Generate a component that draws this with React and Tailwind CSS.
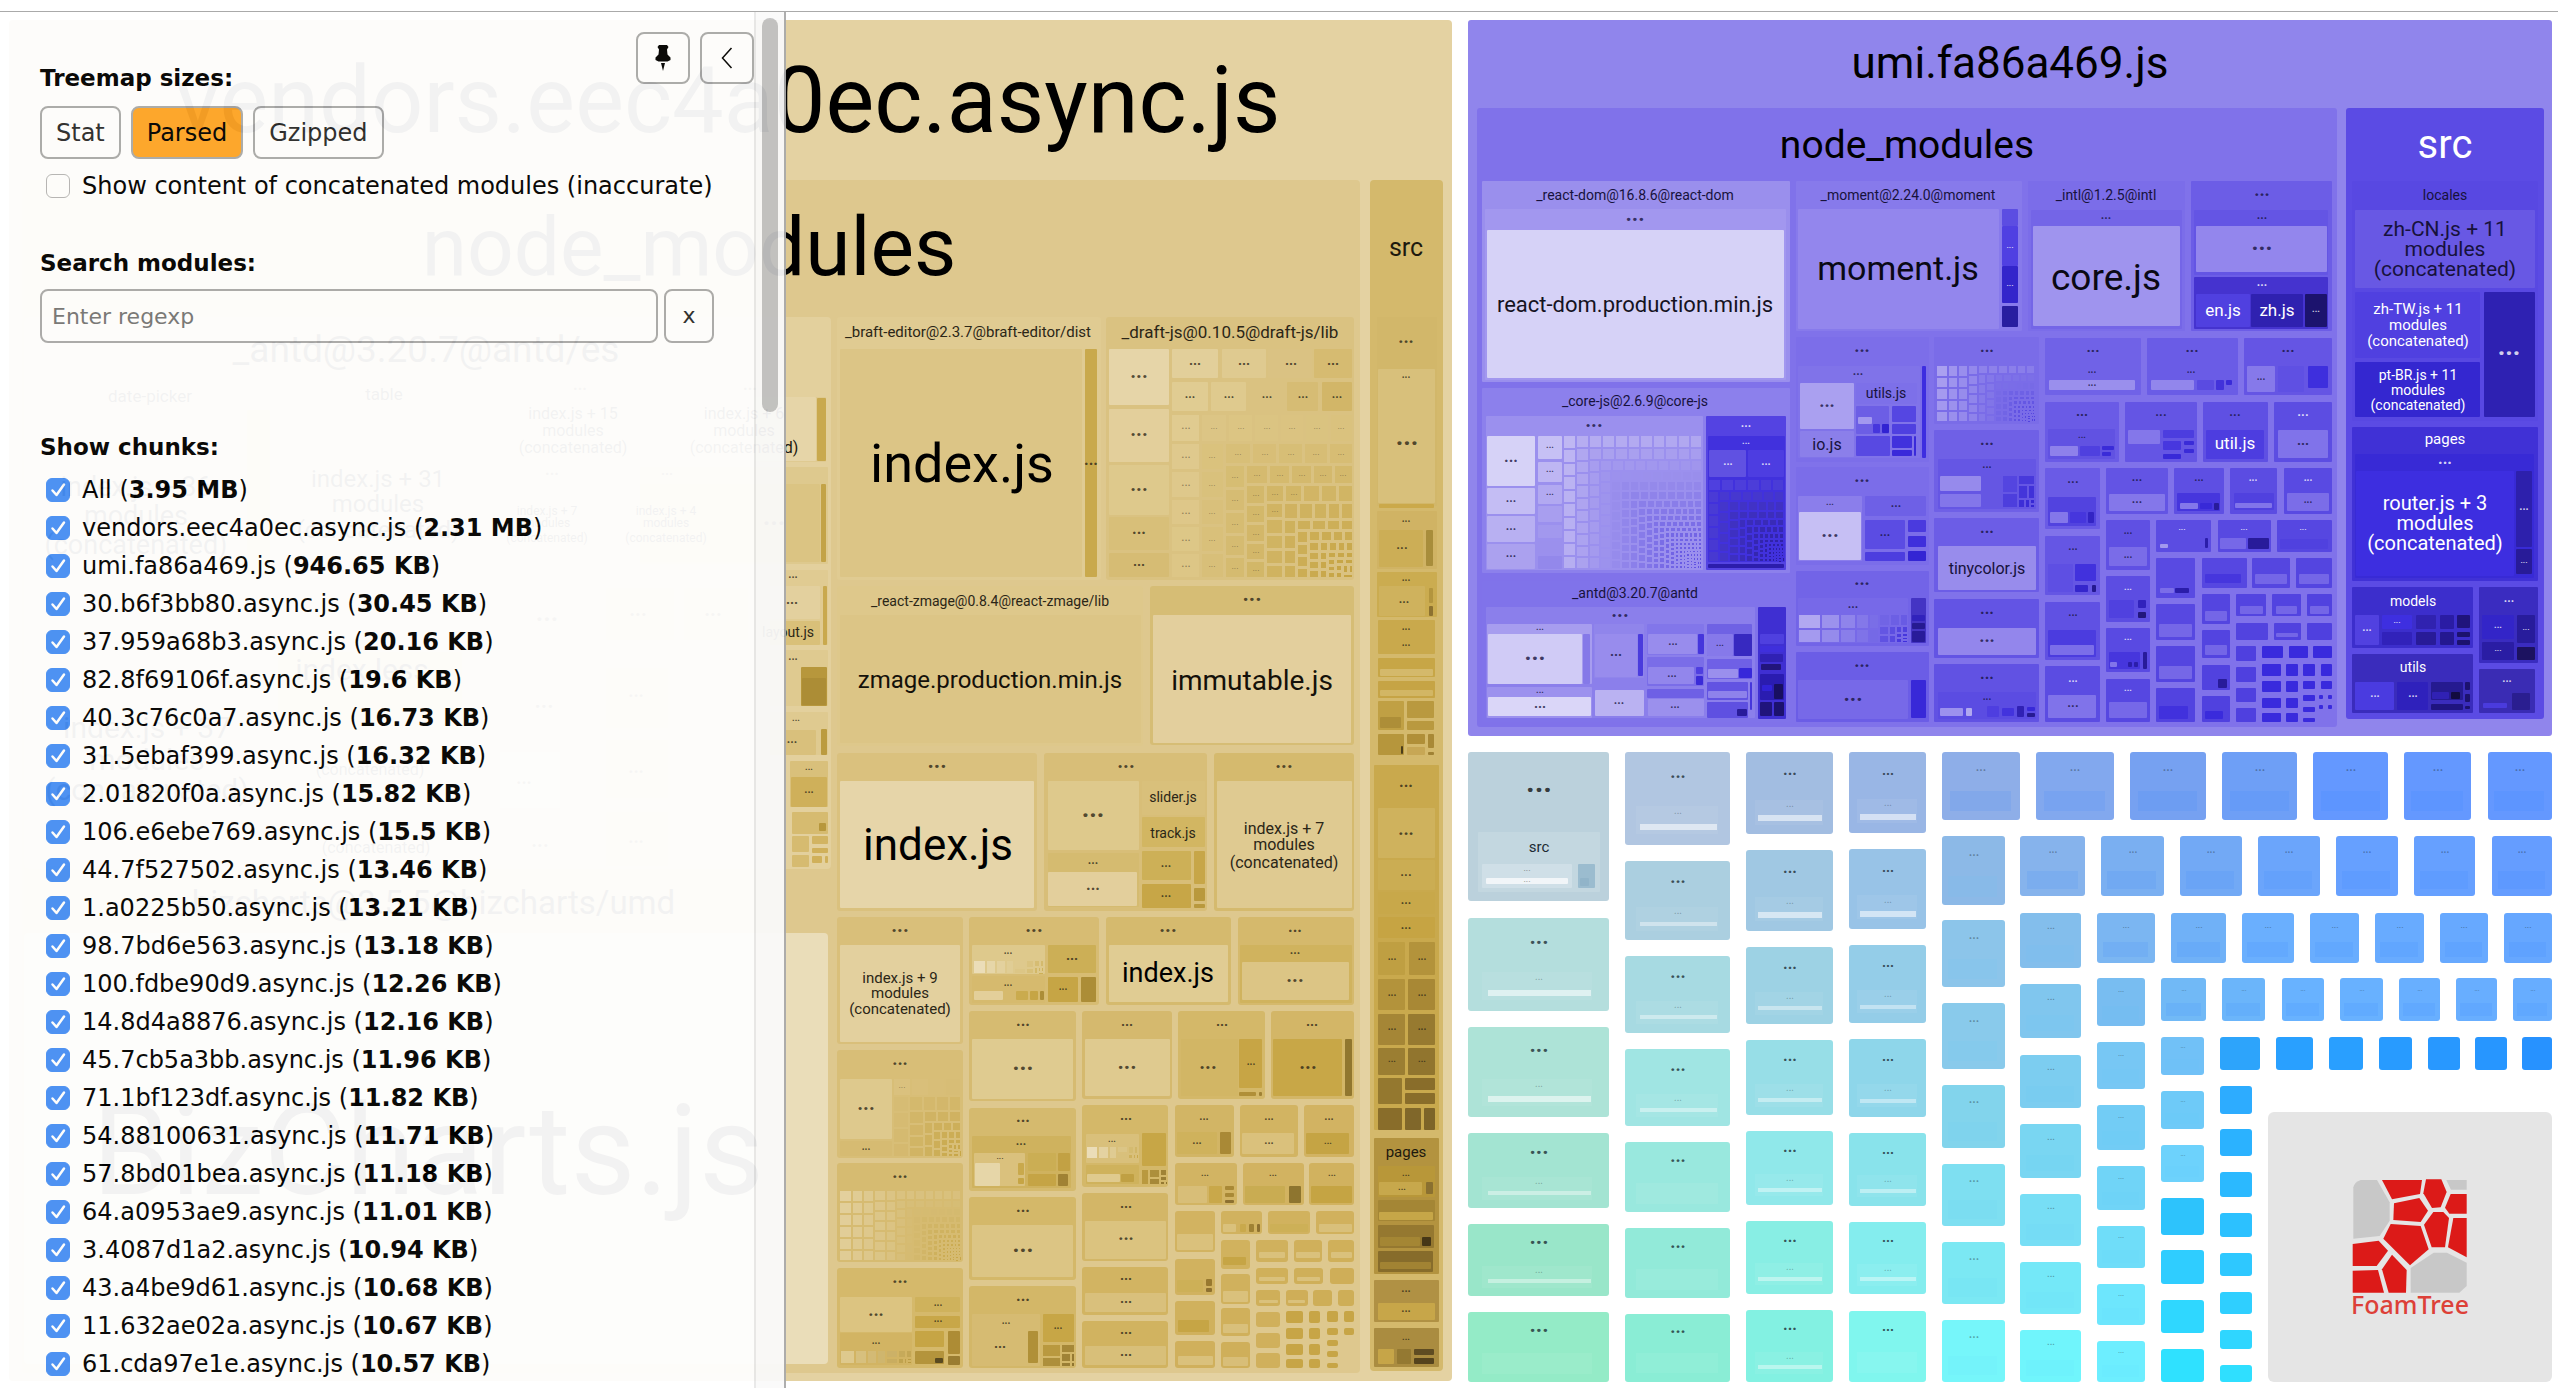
import React from "react";

/* ---------- treemap primitives ---------- */

const MAP_FONT = 'Roboto, "Liberation Sans", sans-serif';

// Each cell is [left, top, right, bottom, fill].
function Cells({ list, r = 1 }) {
  return list.map(([x1, y1, x2, y2, fill], i) => (
    <rect key={i} x={x1} y={y1} width={x2 - x1} height={y2 - y1} rx={r} fill={fill} />
  ));
}

// Each label is [text, centre x, baseline, size, colour].
function Labels({ list }) {
  return list.map(([text, x, y, size, fill = "#000"], i) => (
    <text key={i} x={x} y={y} fontSize={size} fill={fill} textAnchor="middle">
      {text}
    </text>
  ));
}

// Each entry is [centre x, centre y, size].
function Dots({ list, fill = "#2b2617", opacity = 0.8 }) {
  return list.map(([x, y, size = 16], i) => (
    <text key={i} x={x} y={y + 1} fontSize={size} fontWeight={700} fill={fill} fillOpacity={opacity} textAnchor="middle">
      ...
    </text>
  ));
}

const hex = (c) => [1, 3, 5].map((i) => parseInt(c.slice(i, i + 2), 16));
const mix = (a, b, t) => {
  const p = hex(a);
  const q = hex(b);
  return `rgb(${p.map((v, i) => Math.round(v + (q[i] - v) * t)).join(",")})`;
};

function squarify(weights, x, y, w, h) {
  const out = [];
  let left = weights.reduce((s, v) => s + v, 0);
  let i = 0;
  while (i < weights.length) {
    const scale = (w * h) / left;
    const side = Math.min(w, h);
    let sum = 0;
    let count = 0;
    let best = Infinity;
    while (i + count < weights.length) {
      const next = sum + weights[i + count];
      const area = next * scale;
      const ratio = Math.max(
        (side * side * weights[i] * scale) / (area * area),
        (area * area) / (side * side * weights[i + count] * scale)
      );
      if (ratio > best) break;
      best = ratio;
      sum = next;
      count += 1;
    }
    const thick = (sum * scale) / side;
    let at = 0;
    for (let k = 0; k < count; k += 1) {
      const len = (side * weights[i + k]) / sum;
      out.push(w >= h ? [x, y + at, thick, len] : [x + at, y, len, thick]);
      at += len;
    }
    if (w >= h) {
      x += thick;
      w -= thick;
    } else {
      y += thick;
      h -= thick;
    }
    left -= sum;
    i += count;
  }
  return out;
}

// Fills a box with n modules that shrink from the first to the last.
function Swarm({ box, n, from, to, gap = 3, power = 2, dots = "#2b2617" }) {
  const [x1, y1, x2, y2] = box;
  const weights = Array.from({ length: n }, (_, i) => Math.pow(1 - i / n, power) + 0.06);
  return squarify(weights, x1, y1, x2 - x1 + gap, y2 - y1 + gap).map(([x, y, w, h], i) => (
    <g key={i}>
      <rect
        x={Math.round(x)}
        y={Math.round(y)}
        width={Math.max(1, Math.round(x + w) - Math.round(x) - gap)}
        height={Math.max(1, Math.round(y + h) - Math.round(y) - gap)}
        fill={mix(from, to, Math.pow(i / Math.max(1, n - 1), 0.7))}
      />
      {w > 18 && h > 16 && (
        <text x={Math.round(x + (w - gap) / 2)} y={Math.round(y + h / 2)} fontSize={w > 30 ? 12 : 9} fill={dots} fillOpacity={0.5} textAnchor="middle">
          ...
        </text>
      )}
    </g>
  ));
}

/* ---------- vendors chunk ---------- */

const GOLD_GROUPS = [
  [837, 317, 1101, 580, "#e0cb92"],
  [1106, 317, 1354, 580, "#dac281"],
  [837, 586, 1143, 746, "#dec88b"],
  [1150, 586, 1354, 745, "#d6bd75"],
  [837, 753, 1037, 911, "#dac17e"],
  [1044, 753, 1207, 911, "#d8be78"],
  [1214, 753, 1354, 911, "#d5ba6e"],
  [837, 917, 963, 1044, "#d9bf7a"],
  [969, 917, 1099, 1005, "#d7bc73"],
  [1106, 917, 1231, 1005, "#d5ba6e"],
  [1238, 917, 1354, 1005, "#d5b96c"],
  [969, 1011, 1076, 1101, "#d6bb71"],
  [1082, 1011, 1172, 1099, "#d5b96e"],
  [1178, 1011, 1265, 1099, "#d4b869"],
  [1271, 1011, 1354, 1099, "#d3b667"],
  [837, 1050, 963, 1158, "#d8be77"],
  [837, 1163, 963, 1262, "#d6bb71"],
  [837, 1268, 963, 1368, "#d5b96b"],
  [969, 1108, 1076, 1191, "#d5ba6e"],
  [969, 1197, 1076, 1280, "#d4b869"],
  [969, 1286, 1076, 1368, "#d3b768"],
  [1082, 1105, 1168, 1187, "#d4b869"],
  [1082, 1193, 1168, 1261, "#d3b667"],
  [1082, 1267, 1168, 1315, "#d2b462"],
  [1082, 1321, 1168, 1368, "#d1b360"],
  [1175, 1105, 1234, 1157, "#d2b565"],
  [1240, 1105, 1298, 1157, "#d2b462"],
  [1304, 1105, 1354, 1157, "#d2b362"],
  [1175, 1163, 1237, 1205, "#d2b463"],
  [1243, 1163, 1304, 1205, "#d2b361"],
  [1309, 1163, 1354, 1205, "#d1b25f"],
  [1175, 1211, 1215, 1252, "#d2b361"],
  [1175, 1259, 1215, 1295, "#d1b25f"],
  [1175, 1301, 1215, 1335, "#d0b15d"],
  [1175, 1341, 1215, 1368, "#d0b05c"],
  [1221, 1211, 1262, 1234, "#d1b25f"],
  [1268, 1211, 1310, 1234, "#d1b25e"],
  [1316, 1211, 1354, 1234, "#d1b15d"],
  [1221, 1240, 1250, 1269, "#d1b25e"],
  [1221, 1274, 1250, 1304, "#d0b15d"],
  [1221, 1308, 1250, 1336, "#d0b05b"],
  [1221, 1342, 1250, 1368, "#cfaf5a"],
  [1256, 1240, 1288, 1262, "#d0b15d"],
  [1294, 1240, 1322, 1262, "#d0b05b"],
  [1328, 1240, 1354, 1262, "#d0b05a"],
  [1256, 1268, 1288, 1284, "#d0b05a"],
  [1294, 1268, 1323, 1284, "#cfaf59"],
  [1330, 1268, 1354, 1284, "#cfae58"],
  [1256, 1290, 1280, 1306, "#cfaf59"],
  [1286, 1290, 1308, 1306, "#cfae58"],
  [1313, 1290, 1332, 1306, "#ceae57"],
  [1338, 1290, 1354, 1306, "#ceae57"],
  [1256, 1312, 1280, 1327, "#d0b05c"],
  [1256, 1333, 1280, 1348, "#d0b05c"],
  [1256, 1353, 1280, 1368, "#d0b05c"],
];

const GOLD_CELLS = [
  [840, 349, 1082, 577, "#dcc586"],
  [1085, 349, 1097, 577, "#c9a94c"],
  [1109, 349, 1169, 405, "#e6d5a8"],
  [1109, 409, 1169, 462, "#e3cf9b"],
  [1109, 465, 1169, 515, "#dec98c"],
  [1109, 517, 1169, 550, "#d8bf79"],
  [1109, 553, 1169, 577, "#d6bc74"],
  [1172, 349, 1218, 378, "#e2cf9a"],
  [1222, 349, 1266, 378, "#dfca90"],
  [1268, 349, 1312, 378, "#dac283"],
  [1314, 349, 1352, 378, "#d6bb71"],
  [1172, 382, 1208, 411, "#e0cc92"],
  [1211, 382, 1246, 411, "#dfca8e"],
  [1249, 382, 1284, 411, "#dac281"],
  [1287, 382, 1318, 411, "#d6bc74"],
  [1322, 382, 1352, 411, "#d2b668"],
  [840, 615, 1141, 743, "#dcc586"],
  [1153, 615, 1351, 743, "#e3cf9d"],
  [840, 781, 1034, 908, "#e6d5a9"],
  [1048, 781, 1139, 850, "#dec98c"],
  [1048, 853, 1139, 907, "#d5bb70"],
  [1048, 872, 1137, 906, "#e3cf9c"],
  [1142, 781, 1205, 815, "#d9c07b"],
  [1142, 817, 1205, 847, "#d2b662"],
  [1142, 851, 1191, 880, "#cdb057"],
  [1142, 884, 1191, 908, "#c7a647"],
  [1194, 851, 1205, 884, "#c7a648"],
  [1194, 888, 1205, 901, "#b9993d"],
  [1194, 904, 1205, 908, "#b9993d"],
  [1217, 781, 1352, 908, "#dfca91"],
  [840, 945, 960, 1042, "#e3d09e"],
  [972, 945, 1045, 974, "#dec98c"],
  [972, 976, 1045, 1003, "#d6ba6e"],
  [974, 991, 1003, 1000, "#e3cf9a"],
  [1016, 991, 1028, 1000, "#caab4e"],
  [1030, 991, 1038, 1000, "#c6a545"],
  [1040, 991, 1044, 1000, "#ac8d37"],
  [1048, 945, 1096, 973, "#ccaf56"],
  [1048, 977, 1078, 1002, "#c6a545"],
  [1081, 977, 1096, 1002, "#ac8d37"],
  [1109, 945, 1228, 1002, "#e0cc93"],
  [1240, 945, 1352, 1003, "#d0b35e"],
  [1242, 962, 1349, 1000, "#dcc585"],
  [972, 1039, 1073, 1099, "#dfcb90"],
  [1085, 1039, 1170, 1096, "#dfca8f"],
  [1181, 1039, 1238, 1096, "#d2b665"],
  [1239, 1039, 1262, 1088, "#c7a545"],
  [1239, 1092, 1256, 1096, "#b08f38"],
  [1259, 1092, 1262, 1096, "#a08234"],
  [1273, 1039, 1342, 1096, "#c8a747"],
  [1345, 1039, 1352, 1096, "#91772f"],
  [840, 1079, 892, 1139, "#dec98d"],
  [840, 1141, 892, 1156, "#d6bb72"],
  [840, 1297, 912, 1332, "#dcc481"],
  [840, 1333, 912, 1365, "#d2b463"],
  [915, 1297, 960, 1312, "#cfb25c"],
  [915, 1316, 960, 1328, "#c8a748"],
  [915, 1331, 944, 1347, "#c6a545"],
  [915, 1351, 944, 1364, "#b4943c"],
  [935, 1358, 943, 1363, "#5a4a20"],
  [948, 1331, 960, 1354, "#ad8c35"],
  [948, 1356, 960, 1365, "#9a7d31"],
  [972, 1136, 1071, 1188, "#cfb25e"],
  [974, 1153, 1025, 1186, "#dac17d"],
  [975, 1163, 1000, 1186, "#e6d6a8"],
  [1018, 1163, 1024, 1175, "#c9a94c"],
  [1018, 1178, 1024, 1184, "#c6a545"],
  [1028, 1153, 1056, 1171, "#cbae54"],
  [1058, 1153, 1070, 1171, "#c2a144"],
  [1028, 1174, 1056, 1186, "#c5a445"],
  [1058, 1174, 1068, 1186, "#a08234"],
  [972, 1225, 1073, 1277, "#dcc584"],
  [972, 1314, 1040, 1366, "#d6bb72"],
  [1028, 1331, 1038, 1363, "#b09038"],
  [1043, 1314, 1074, 1342, "#c7a646"],
  [1086, 1134, 1139, 1163, "#d9c07b"],
  [1086, 1165, 1139, 1184, "#cfb25c"],
  [1087, 1174, 1120, 1182, "#dfca8e"],
  [1121, 1174, 1134, 1182, "#c0a043"],
  [1142, 1133, 1166, 1166, "#c7a646"],
  [1085, 1221, 1166, 1259, "#dbc37f"],
  [1085, 1293, 1166, 1312, "#d9c07c"],
  [1085, 1346, 1166, 1365, "#d8bf79"],
  [1177, 1132, 1217, 1154, "#cfb25c"],
  [1220, 1132, 1231, 1154, "#a98936"],
  [1242, 1133, 1294, 1154, "#dac17c"],
  [1306, 1133, 1349, 1154, "#c5a444"],
  [1178, 1186, 1207, 1203, "#d8be78"],
  [1209, 1186, 1222, 1203, "#c9a84a"],
  [1225, 1186, 1234, 1190, "#a98936"],
  [1225, 1193, 1234, 1197, "#a98936"],
  [1225, 1200, 1234, 1203, "#8d7030"],
  [1245, 1186, 1285, 1203, "#c9ac52"],
  [1289, 1186, 1301, 1203, "#8e752f"],
  [1311, 1186, 1352, 1203, "#c5a443"],
  [1177, 1234, 1213, 1250, "#dac17c"],
  [1223, 1224, 1236, 1232, "#dac17c"],
  [1240, 1224, 1246, 1232, "#c9a94c"],
  [1249, 1224, 1254, 1232, "#a08234"],
  [1257, 1224, 1260, 1232, "#8d7030"],
  [1270, 1224, 1308, 1232, "#cdb057"],
  [1319, 1224, 1352, 1232, "#d9c07b"],
  [1177, 1280, 1203, 1292, "#cdb057"],
  [1206, 1279, 1212, 1286, "#98792f"],
  [1206, 1288, 1212, 1292, "#8d7030"],
  [1178, 1320, 1209, 1332, "#c6a545"],
  [1178, 1356, 1213, 1365, "#dac17c"],
  [1223, 1257, 1246, 1265, "#c6a545"],
  [1223, 1291, 1248, 1302, "#dac17c"],
  [1223, 1324, 1248, 1333, "#d9c07b"],
  [1223, 1357, 1248, 1366, "#d8be78"],
  [1259, 1252, 1285, 1258, "#dac17c"],
  [1296, 1252, 1320, 1258, "#dac17c"],
  [1331, 1252, 1352, 1258, "#dac17c"],
  [1259, 1277, 1285, 1281, "#dac17c"],
  [1297, 1277, 1320, 1281, "#dac17c"],
  [1259, 1300, 1278, 1303, "#dac17c"],
  [1288, 1300, 1305, 1303, "#dac17c"],
  // left edge of the antd group, next to the drawer
  [760, 397, 826, 462, "#dfca91"],
  [640, 397, 816, 461, "#e6d5a8"],
  [817, 398, 826, 461, "#c9a94e"],
  [640, 467, 828, 564, "#dec98e"],
  [640, 484, 820, 562, "#dbc483"],
  [821, 484, 826, 562, "#c3a347"],
  [770, 570, 828, 645, "#e0cb92"],
  [770, 586, 820, 619, "#e3d09e"],
  [770, 621, 820, 645, "#d9c079"],
  [823, 586, 827, 645, "#c9a94e"],
  [770, 650, 828, 706, "#dfca90"],
  [801, 667, 827, 706, "#b7973c"],
  [802, 678, 826, 705, "#ac8d36"],
  [770, 712, 828, 755, "#dfca90"],
  [770, 730, 816, 755, "#d9c07c"],
  [821, 729, 827, 755, "#bb9b3f"],
  [790, 761, 828, 807, "#d9c07b"],
  [791, 777, 827, 807, "#cfb05a"],
  [792, 812, 828, 834, "#d6bb70"],
  [819, 823, 826, 831, "#b7973c"],
  [792, 836, 809, 852, "#d6bb70"],
  [812, 836, 828, 844, "#d2b462"],
  [812, 848, 828, 853, "#d0b05a"],
  [792, 855, 809, 867, "#d6bb70"],
  [812, 856, 822, 863, "#d0b05a"],
  [825, 856, 828, 863, "#d0b05a"],
];

const GOLD_DARK_GRID = [
  [1286, 1303, [1311, 1323, 1328, 1339, 1344, 1355, 1359, 1368]],
  [1309, 1320, [1311, 1323, 1328, 1339, 1344, 1355, 1359, 1368]],
  [1327, 1338, [1311, 1322, 1328, 1335, 1340, 1346, 1351, 1357, 1363, 1368]],
  [1344, 1354, [1311, 1322, 1328, 1335]],
].flatMap(([x1, x2, ys]) =>
  ys.flatMap((y, i) => (i % 2 ? [] : [[x1, y, x2, ys[i + 1], "#c7a546"]]))
);

const GOLD_SRC = [
  [1377, 317, 1437, 506, "#d2b76a"],
  [1378, 369, 1435, 503, "#d8c07b"],
  [1379, 504, 1434, 508, "#cba94a"],
  [1377, 511, 1437, 569, "#d0b364"],
  [1379, 530, 1423, 567, "#ccae56"],
  [1426, 530, 1433, 566, "#a88d3b"],
  [1377, 572, 1437, 617, "#cbac50"],
  [1379, 586, 1425, 616, "#cfb25d"],
  [1429, 588, 1433, 603, "#b3953e"],
  [1429, 606, 1433, 616, "#8d7230"],
  [1378, 620, 1435, 654, "#c9a94c"],
  [1378, 658, 1435, 677, "#c7a646"],
  [1380, 669, 1433, 676, "#d4b96b"],
  [1378, 681, 1435, 698, "#c6a445"],
  [1380, 690, 1433, 696, "#d2b664"],
  [1378, 701, 1404, 730, "#c0a044"],
  [1380, 717, 1401, 728, "#ad8e38"],
  [1407, 701, 1434, 718, "#b9993f"],
  [1407, 721, 1434, 730, "#b9993f"],
  [1378, 734, 1404, 755, "#b6963c"],
  [1401, 746, 1403, 754, "#4b3d1a"],
  [1407, 734, 1425, 744, "#b08f38"],
  [1428, 734, 1434, 748, "#a98936"],
  [1407, 747, 1425, 755, "#c7a755"],
  [1428, 752, 1434, 755, "#a08234"],
  [1374, 765, 1439, 1130, "#c9a94d"],
  [1378, 808, 1435, 858, "#cfb25d"],
  [1378, 860, 1435, 890, "#cbad53"],
  [1378, 892, 1435, 914, "#c8a84a"],
  [1378, 917, 1435, 938, "#c6a443"],
  [1378, 942, 1405, 975, "#bf9f42"],
  [1409, 942, 1435, 975, "#b3933b"],
  [1378, 979, 1405, 1010, "#b3933b"],
  [1408, 979, 1435, 1010, "#a88835"],
  [1378, 1014, 1405, 1045, "#a58636"],
  [1408, 1014, 1435, 1045, "#977a30"],
  [1378, 1048, 1405, 1075, "#9b7e32"],
  [1408, 1048, 1435, 1075, "#91752e"],
  [1378, 1078, 1402, 1104, "#94782f"],
  [1405, 1078, 1435, 1090, "#896d2a"],
  [1405, 1093, 1435, 1104, "#896d2a"],
  [1378, 1108, 1402, 1130, "#896d2a"],
  [1405, 1108, 1421, 1130, "#80672a"],
  [1424, 1108, 1435, 1130, "#7d6428"],
  [1374, 1138, 1439, 1274, "#b3933f"],
  [1378, 1166, 1435, 1197, "#b89739"],
  [1379, 1182, 1422, 1195, "#c7a84c"],
  [1426, 1182, 1433, 1194, "#8a7030"],
  [1378, 1200, 1435, 1221, "#a48635"],
  [1379, 1212, 1433, 1220, "#c6a648"],
  [1378, 1225, 1434, 1248, "#957830"],
  [1380, 1237, 1420, 1246, "#a48634"],
  [1422, 1237, 1431, 1246, "#463717"],
  [1378, 1251, 1433, 1272, "#876c2b"],
  [1380, 1262, 1431, 1269, "#a28333"],
  [1374, 1280, 1439, 1322, "#b09144"],
  [1378, 1303, 1435, 1320, "#c7a649"],
  [1374, 1328, 1439, 1367, "#aa8c40"],
  [1378, 1349, 1394, 1364, "#c6a548"],
  [1397, 1349, 1411, 1364, "#947932"],
  [1414, 1349, 1434, 1355, "#5f4c22"],
  [1414, 1358, 1434, 1364, "#55431d"],
];

const GOLD_LABELS = [
  ["vendors.eec4a0ec.async.js", 728, 132, 92],
  ["node_modules", 689, 275, 82],
  ["src", 1406, 256, 25, "#1d190e"],
  ["_antd@3.20.7@antd/es", 426, 362, 37],
  ["date-picker", 150, 402, 17],
  ["table", 384, 400, 17],
  ["index.js + 15", 573, 419, 16],
  ["modules", 573, 436, 16],
  ["(concatenated)", 573, 453, 16],
  ["index.js + 6", 744, 419, 16],
  ["modules", 744, 436, 16],
  ["(concatenated)", 744, 453, 16, "#1d190e"],
  ["index.js + 31", 378, 487, 24],
  ["modules", 378, 512, 24],
  ["(concatenated)", 378, 538, 24],
  ["index.js + 36", 136, 496, 27],
  ["modules", 136, 525, 27],
  ["(concatenated)", 136, 554, 27],
  ["index.js + 7", 547, 515, 12],
  ["modules", 547, 527, 12],
  ["(concatenated)", 547, 542, 12],
  ["index.js + 4", 666, 515, 12],
  ["modules", 666, 527, 12],
  ["(concatenated)", 666, 542, 12],
  ["index.less", 362, 680, 30],
  ["index.js + 37", 147, 738, 30],
  ["modules", 147, 770, 30],
  ["(concatenated)", 147, 800, 30],
  ["(concatenated)", 370, 775, 16],
  ["(concatenated)", 376, 853, 16],
  ["_bizcharts@3.5.5@bizcharts/umd", 426, 914, 33],
  ["BizCharts.js", 428, 1194, 126],
  ["layout.js", 788, 637, 14, "#2b2617"],
  ["_braft-editor@2.3.7@braft-editor/dist", 968, 337, 15, "#2b2617"],
  ["index.js", 962, 482, 54],
  ["_draft-js@0.10.5@draft-js/lib", 1230, 338, 17, "#2b2617"],
  ["_react-zmage@0.8.4@react-zmage/lib", 990, 606, 14, "#2b2617"],
  ["zmage.production.min.js", 990, 688, 24, "#14110a"],
  ["immutable.js", 1252, 690, 28, "#14110a"],
  ["index.js", 938, 860, 44],
  ["slider.js", 1173, 802, 14, "#2b2617"],
  ["track.js", 1173, 838, 14, "#2b2617"],
  ["index.js + 7", 1284, 834, 16, "#2b2617"],
  ["modules", 1284, 850, 16, "#2b2617"],
  ["(concatenated)", 1284, 868, 16, "#2b2617"],
  ["index.js + 9", 900, 983, 15, "#2b2617"],
  ["modules", 900, 998, 15, "#2b2617"],
  ["(concatenated)", 900, 1014, 15, "#2b2617"],
  ["index.js", 1168, 982, 27],
  ["pages", 1406, 1157, 15, "#1d190e"],
];

const GOLD_DOTS = [
  [1091, 464, 16], [1139, 377, 20], [1139, 435, 20], [1139, 490, 20], [1139, 533], [1139, 565, 14],
  [1195, 364, 14], [1244, 364, 14], [1291, 364, 14], [1333, 364, 14],
  [1190, 397, 12], [1229, 397, 12], [1267, 397, 12], [1303, 397, 12], [1337, 397, 12],
  [1252, 600, 22], [937, 767, 22], [1126, 767, 20], [1284, 767, 20], [1093, 816, 26], [1093, 863, 12],
  [1093, 889], [1166, 866, 12], [1166, 896, 12], [900, 931, 20], [1034, 931, 20], [1168, 931, 20],
  [1295, 931], [1295, 953, 12], [1295, 981, 20], [1008, 953, 10], [1008, 985, 10], [1072, 959, 14], [1063, 989, 10],
  [1023, 1025], [1023, 1069, 24], [1127, 1025, 14], [1127, 1068, 22], [1222, 1025, 14], [1208, 1068, 20],
  [1251, 1064, 10], [1312, 1025, 14], [1308, 1068, 20], [900, 1064, 18], [866, 1109, 20], [866, 1149, 10],
  [900, 1177, 18], [900, 1282, 18], [876, 1315, 18], [876, 1343, 10], [938, 1305, 10], [938, 1321, 10],
  [1023, 1121], [1021, 1144, 12], [1000, 1158, 8], [1023, 1211], [1023, 1251, 24], [1023, 1300],
  [1006, 1323, 10], [1000, 1347, 14], [1058, 1328, 10], [1126, 1119, 14], [1112, 1141, 9], [1126, 1207, 14],
  [1126, 1239, 18], [1126, 1279, 14], [1126, 1302, 14], [1126, 1333, 14], [1126, 1355, 14], [1204, 1119, 11],
  [1269, 1119, 11], [1329, 1119, 11], [1197, 1143, 11], [1269, 1143, 11], [1328, 1143, 9], [1205, 1175, 9],
  [1273, 1175, 9], [1332, 1175, 9], [1406, 342, 18], [1406, 377, 10], [1407, 444, 26], [1406, 521, 10],
  [1402, 548, 13], [1406, 580, 10], [1404, 602, 12], [1406, 629, 10], [1406, 645, 10], [1406, 786],
  [1406, 834, 18], [1406, 875, 13], [1406, 903, 12], [1406, 928, 12], [1392, 959, 10], [1422, 959, 10],
  [1392, 995, 10], [1422, 995, 10], [1392, 1029, 10], [1422, 1029, 10], [1392, 1061, 9], [1422, 1061, 9],
  [1406, 1175, 9], [1402, 1189, 9], [1406, 1291, 11], [1406, 1311, 11], [1406, 1339, 9], [793, 577, 11],
  [792, 603, 14], [793, 659, 11], [796, 720, 9], [792, 742, 12], [809, 769, 9], [809, 792, 11],
];

const GHOST_DOTS = [
  [580, 389, 16], [750, 389, 16], [552, 474, 16], [667, 474, 14], [774, 524, 26], [547, 620, 26],
  [638, 615, 20], [713, 615, 20], [544, 707, 22], [636, 696, 18], [524, 783, 18], [636, 772, 18],
  [540, 846, 20], [636, 842, 18],
];

const GHOST_CELLS = [
  [26, 382, 272, 580, "#e7d6aa"], [247, 410, 270, 575, "#dcc585"], [276, 382, 480, 640, "#e6d5a8"],
  [485, 400, 655, 460, "#e6d5a8"], [656, 400, 664, 460, "#d0b45f"], [500, 482, 602, 560, "#e3d09e"],
  [616, 482, 718, 560, "#e3d09e"], [500, 580, 596, 668, "#e6d5a8"], [606, 588, 674, 640, "#e0cb92"],
  [684, 588, 748, 640, "#dec98c"], [500, 676, 596, 740, "#e6d5a8"], [606, 668, 668, 728, "#dec98c"],
  [500, 752, 560, 808, "#ebddb8"], [606, 740, 668, 798, "#dec98c"], [500, 816, 590, 864, "#e6d5a8"],
  [606, 812, 668, 866, "#dec98c"], [26, 640, 270, 866, "#e6d5a8"], [278, 652, 462, 730, "#dcc585"],
  [278, 738, 462, 800, "#e6d5a8"], [278, 808, 462, 866, "#e6d5a8"],
];

function VendorsChunk() {
  return (
    <g>
      <Cells
        r={4}
        list={[
          [9, 20, 1452, 1381, "#e4d2a2"],
          [22, 180, 1360, 1373, "#dec88e"],
          [1370, 180, 1443, 1371, "#d4b96c"],
          [24, 317, 831, 869, "#e3d09d"],
          [24, 933, 828, 1364, "#eaddb9"],
        ]}
      />
      <Cells list={GHOST_CELLS} />
      <Cells list={GOLD_GROUPS} r={3} />
      <Cells list={GOLD_CELLS} />
      <Cells list={GOLD_DARK_GRID} r={2} />
      <Cells list={GOLD_SRC} />
      <Swarm box={[1172, 415, 1352, 577]} n={92} from="#e0cb90" to="#c6a443" />
      <Swarm box={[894, 1079, 960, 1156]} n={44} from="#dac17e" to="#c7a648" gap={2} />
      <Swarm box={[840, 1191, 960, 1260]} n={150} from="#e3d09d" to="#c8a749" gap={2} />
      <Swarm box={[974, 961, 1043, 973]} n={14} from="#ebddb8" to="#cdb057" gap={2} />
      <Swarm box={[841, 1351, 911, 1363]} n={12} from="#dec98d" to="#b9993f" gap={2} />
      <Swarm box={[1087, 1147, 1137, 1158]} n={10} from="#ebddb8" to="#c9a94c" gap={2} />
      <Swarm box={[1142, 1170, 1166, 1184]} n={7} from="#b9993f" to="#907530" gap={2} />
      <Swarm box={[1043, 1345, 1074, 1366]} n={7} from="#b9993f" to="#907530" gap={2} />
      <Labels list={GOLD_LABELS} />
      <Dots list={GOLD_DOTS} />
      <Dots list={GHOST_DOTS} />
    </g>
  );
}

/* ---------- umi chunk ---------- */

const VIOLET_GROUPS = [
  [1482, 181, 1790, 382, "#9a8fed"],
  [1482, 388, 1790, 573, "#8c80ec"],
  [1482, 581, 1790, 722, "#8073ea"],
  [1796, 181, 2022, 331, "#877aeb"],
  [2028, 181, 2185, 331, "#7b6de9"],
  [2191, 181, 2332, 331, "#6c5de6"],
  [1796, 337, 1929, 462, "#7c6ee9"],
  [1796, 467, 1929, 565, "#7b6de9"],
  [1796, 571, 1929, 646, "#7264e7"],
  [1796, 652, 1929, 722, "#6b5de6"],
  [1934, 337, 2039, 424, "#7a6ce8"],
  [1934, 430, 2039, 512, "#6f60e6"],
  [1934, 518, 2039, 592, "#6c5de6"],
  [1934, 599, 2039, 658, "#6354e4"],
  [1934, 664, 2039, 722, "#6152e3"],
  [2045, 338, 2141, 395, "#7062e7"],
  [2147, 338, 2238, 395, "#6a5ce6"],
  [2244, 338, 2332, 395, "#6555e4"],
  [2045, 402, 2119, 462, "#6a5be6"],
  [2125, 402, 2197, 462, "#6455e4"],
  [2203, 402, 2268, 462, "#5f50e3"],
  [2274, 402, 2332, 462, "#5c4de2"],
  [2045, 468, 2100, 529, "#6a5be6"],
  [2045, 536, 2100, 595, "#6556e4"],
  [2045, 602, 2100, 660, "#6051e3"],
  [2045, 666, 2100, 722, "#5b4ce2"],
  [2106, 468, 2168, 514, "#6354e4"],
  [2174, 468, 2224, 514, "#5e4fe3"],
  [2230, 468, 2277, 514, "#5b4ce2"],
  [2284, 468, 2332, 514, "#594ae2"],
  [2106, 520, 2150, 570, "#5f50e3"],
  [2106, 576, 2150, 622, "#5c4de2"],
  [2106, 628, 2150, 672, "#594ae2"],
  [2106, 679, 2150, 722, "#5647e1"],
  [2156, 520, 2211, 552, "#5b4ce2"],
  [2218, 520, 2271, 552, "#5849e1"],
  [2277, 520, 2332, 552, "#5647e1"],
  [2156, 558, 2195, 598, "#594ae2"],
  [2156, 604, 2195, 640, "#5748e1"],
  [2156, 646, 2195, 682, "#5445e0"],
  [2156, 688, 2195, 722, "#5243e0"],
  [2202, 558, 2247, 588, "#5647e1"],
  [2252, 558, 2290, 588, "#5546e0"],
  [2296, 558, 2332, 588, "#5445e0"],
  [2202, 594, 2230, 624, "#5445e0"],
  [2202, 630, 2230, 658, "#5344e0"],
  [2202, 665, 2230, 690, "#5142df"],
  [2202, 696, 2230, 722, "#5041df"],
  [2236, 594, 2266, 616, "#5344e0"],
  [2272, 594, 2301, 616, "#5243e0"],
  [2307, 594, 2332, 616, "#5142df"],
  [2236, 623, 2268, 640, "#5243df"],
  [2274, 623, 2301, 640, "#5142df"],
  [2307, 623, 2332, 640, "#4f40df"],
  [2236, 646, 2256, 661, "#4f40df"],
  [2236, 667, 2256, 682, "#4f40df"],
  [2236, 688, 2256, 702, "#4f40df"],
  [2236, 708, 2256, 722, "#4f40df"],
];

const VIOLET_CELLS = [
  [1485, 209, 1786, 380, "#a297ef"],
  [1487, 230, 1784, 378, "#d6d2f7"],
  [1486, 416, 1703, 570, "#9b90ee"],
  [1487, 436, 1535, 486, "#d6d2f7"],
  [1487, 488, 1535, 514, "#c4bdf4"],
  [1487, 516, 1535, 542, "#b8b0f2"],
  [1487, 544, 1535, 569, "#aba1ef"],
  [1538, 436, 1562, 459, "#c6c0f5"],
  [1538, 462, 1562, 482, "#beb6f3"],
  [1538, 485, 1562, 504, "#b2a9f1"],
  [1538, 506, 1562, 522, "#a89eef"],
  [1538, 525, 1562, 538, "#a298ee"],
  [1538, 541, 1562, 553, "#9b90ed"],
  [1538, 556, 1562, 569, "#9388eb"],
  [1706, 416, 1786, 570, "#5443e2"],
  [1708, 436, 1785, 562, "#4131dd"],
  [1709, 450, 1746, 477, "#6051e2"],
  [1748, 450, 1784, 477, "#4d3de1"],
  [1708, 564, 1784, 568, "#2c1dac"],
  [1486, 607, 1755, 718, "#8b7feb"],
  [1487, 624, 1592, 684, "#a79def"],
  [1488, 634, 1582, 684, "#d0cbf6"],
  [1583, 634, 1590, 684, "#8579e8"],
  [1487, 687, 1592, 718, "#9c91ee"],
  [1488, 697, 1591, 716, "#dad6f8"],
  [1594, 624, 1644, 678, "#9085eb"],
  [1595, 634, 1637, 677, "#988ced"],
  [1638, 634, 1643, 676, "#4a3bdd"],
  [1594, 680, 1644, 718, "#8b7feb"],
  [1595, 690, 1644, 716, "#bab2f2"],
  [1647, 624, 1704, 655, "#8276ea"],
  [1648, 634, 1697, 654, "#988ced"],
  [1698, 634, 1704, 654, "#4535dc"],
  [1647, 657, 1704, 686, "#7a6de8"],
  [1648, 667, 1694, 684, "#9286ec"],
  [1696, 667, 1703, 674, "#4f3fe0"],
  [1696, 676, 1703, 685, "#3a2bd8"],
  [1647, 689, 1704, 698, "#6e60e5"],
  [1648, 699, 1704, 716, "#9b90ed"],
  [1707, 624, 1752, 656, "#6f62e4"],
  [1707, 634, 1733, 656, "#8679ea"],
  [1734, 634, 1752, 656, "#3729c0"],
  [1707, 659, 1752, 679, "#6f60e6"],
  [1708, 669, 1738, 678, "#9a8fed"],
  [1739, 668, 1752, 678, "#3728da"],
  [1707, 682, 1748, 700, "#6253e2"],
  [1708, 691, 1747, 698, "#8e82eb"],
  [1707, 702, 1748, 718, "#5f50e1"],
  [1737, 709, 1747, 716, "#281b9a"],
  [1750, 682, 1752, 710, "#4636dc"],
  [1758, 607, 1786, 719, "#3f2fd2"],
  [1760, 634, 1784, 644, "#4f40df"],
  [1760, 646, 1784, 652, "#3f2fdc"],
  [1760, 654, 1783, 662, "#3021b4"],
  [1761, 664, 1781, 670, "#22157c"],
  [1760, 674, 1784, 700, "#2a1cb0"],
  [1762, 685, 1772, 691, "#3122d6"],
  [1774, 684, 1783, 699, "#180f60"],
  [1760, 702, 1772, 716, "#20147c"],
  [1774, 702, 1784, 716, "#1c126e"],
  [1798, 209, 1999, 329, "#9386ed"],
  [2002, 209, 2018, 226, "#5c4de2"],
  [2002, 226, 2018, 266, "#5040e2"],
  [2002, 266, 2018, 303, "#3325cb"],
  [2002, 306, 2018, 327, "#281ea0"],
  [2031, 210, 2182, 329, "#7465e7"],
  [2033, 226, 2180, 326, "#9f94ee"],
  [2194, 210, 2328, 275, "#6455e4"],
  [2196, 226, 2327, 272, "#9386ed"],
  [2194, 277, 2328, 329, "#4533cf"],
  [2196, 294, 2250, 327, "#5040e0"],
  [2251, 294, 2303, 327, "#2f21b0"],
  [2305, 294, 2327, 327, "#1c136e"],
  [1798, 366, 1920, 458, "#8073e9"],
  [1800, 383, 1854, 429, "#aaa0f0"],
  [1800, 431, 1854, 457, "#8b7fea"],
  [1856, 383, 1917, 404, "#7d70e9"],
  [1856, 406, 1889, 434, "#6c5ee5"],
  [1858, 417, 1872, 424, "#a298ef"],
  [1873, 424, 1880, 433, "#4636dd"],
  [1882, 424, 1889, 433, "#3122d2"],
  [1892, 406, 1916, 422, "#5546e2"],
  [1892, 424, 1916, 434, "#4f40e0"],
  [1856, 436, 1890, 456, "#5849e2"],
  [1892, 436, 1912, 448, "#4131dd"],
  [1892, 450, 1912, 456, "#3a2ada"],
  [1914, 436, 1916, 456, "#3a2ada"],
  [1922, 366, 1926, 458, "#3d2de0"],
  [1798, 496, 1862, 561, "#8b7eeb"],
  [1799, 512, 1861, 560, "#c6bff4"],
  [1865, 496, 1926, 516, "#6e60e6"],
  [1865, 520, 1905, 549, "#5b4ce3"],
  [1865, 552, 1905, 561, "#4c3ddf"],
  [1908, 520, 1926, 532, "#4a3ade"],
  [1908, 536, 1926, 547, "#3f2fdc"],
  [1908, 551, 1926, 561, "#3425d4"],
  [1798, 598, 1908, 643, "#7769e8"],
  [1911, 598, 1926, 643, "#4434c4"],
  [1912, 615, 1925, 621, "#3122bc"],
  [1912, 623, 1925, 629, "#261a92"],
  [1912, 631, 1925, 642, "#281b9a"],
  [1798, 680, 1908, 719, "#7769e8"],
  [1911, 680, 1926, 718, "#3828d8"],
  [1938, 459, 2036, 509, "#6556e4"],
  [1940, 476, 1981, 491, "#968aec"],
  [1940, 494, 1981, 507, "#8376ea"],
  [1983, 476, 2001, 507, "#6556e3"],
  [1938, 546, 2036, 590, "#988cec"],
  [1938, 628, 2036, 655, "#9386ec"],
  [1938, 692, 2036, 719, "#5b4ce2"],
  [1940, 708, 1963, 716, "#9c91ee"],
  [1966, 708, 1972, 716, "#b1a8f0"],
  [1987, 706, 1999, 717, "#4e3ee0"],
  [2002, 708, 2014, 716, "#4333dd"],
  [2017, 706, 2024, 717, "#3021b4"],
  [2027, 707, 2035, 711, "#3829d8"],
  [2027, 713, 2035, 717, "#261a92"],
  [2049, 380, 2135, 390, "#9a8fed"],
  [2151, 380, 2194, 390, "#9286ec"],
  [2197, 380, 2214, 390, "#5a4be1"],
  [2216, 380, 2224, 390, "#4232da"],
  [2226, 380, 2232, 385, "#3a2bd8"],
  [2247, 366, 2275, 392, "#8679ea"],
  [2278, 366, 2304, 392, "#5f50e3"],
  [2308, 366, 2328, 388, "#3e2fdd"],
  [2048, 429, 2115, 459, "#6152e2"],
  [2050, 446, 2078, 456, "#8e81eb"],
  [2080, 446, 2100, 456, "#4f40df"],
  [2102, 446, 2114, 450, "#3a2bd8"],
  [2102, 452, 2111, 456, "#3a2bd8"],
  [2128, 430, 2160, 444, "#8477ea"],
  [2163, 430, 2194, 438, "#4c3ddf"],
  [2163, 441, 2181, 450, "#4737df"],
  [2163, 454, 2181, 459, "#3829d8"],
  [2184, 441, 2194, 445, "#3a2bd8"],
  [2184, 449, 2194, 453, "#3a2bd8"],
  [2206, 430, 2264, 459, "#4d3de0"],
  [2278, 430, 2328, 458, "#8073ea"],
  [2048, 497, 2096, 526, "#5243df"],
  [2050, 512, 2068, 523, "#8477ea"],
  [2070, 512, 2086, 523, "#4636dd"],
  [2088, 512, 2094, 523, "#3324c4"],
  [2048, 564, 2073, 592, "#5e4fe3"],
  [2075, 564, 2096, 581, "#4131dd"],
  [2075, 585, 2088, 592, "#3526cc"],
  [2092, 585, 2096, 592, "#241890"],
  [2048, 630, 2096, 657, "#4b3cdf"],
  [2050, 645, 2094, 655, "#7b6ee9"],
  [2048, 695, 2096, 718, "#8073ea"],
  [2109, 494, 2165, 511, "#8477ea"],
  [2177, 493, 2220, 511, "#4636dd"],
  [2180, 503, 2198, 509, "#8477ea"],
  [2200, 503, 2212, 509, "#3829d8"],
  [2214, 503, 2219, 510, "#281b9a"],
  [2234, 493, 2274, 510, "#5041df"],
  [2235, 503, 2272, 508, "#8174ea"],
  [2287, 493, 2329, 511, "#7b6de8"],
  [2109, 547, 2147, 566, "#7a6ce8"],
  [2109, 600, 2134, 618, "#5041df"],
  [2138, 600, 2146, 608, "#3122bc"],
  [2138, 612, 2146, 618, "#22167c"],
  [2109, 652, 2140, 669, "#4636dd"],
  [2110, 662, 2117, 667, "#8174ea"],
  [2128, 662, 2132, 667, "#2b1daa"],
  [2134, 662, 2138, 667, "#2b1daa"],
  [2143, 652, 2147, 669, "#281b9a"],
  [2109, 702, 2147, 718, "#7668e8"],
  [2160, 544, 2168, 548, "#a298ee"],
  [2205, 538, 2208, 548, "#2b1daa"],
  [2220, 538, 2246, 549, "#7668e8"],
  [2248, 538, 2269, 549, "#281b9a"],
  [2280, 539, 2328, 549, "#5041df"],
  [2160, 588, 2174, 593, "#7b6de8"],
  [2175, 588, 2189, 593, "#2b1daa"],
  [2159, 624, 2192, 637, "#7567e7"],
  [2159, 666, 2192, 679, "#7567e7"],
  [2159, 706, 2188, 719, "#4131dd"],
  [2205, 574, 2241, 583, "#4636dd"],
  [2255, 574, 2287, 584, "#7466e7"],
  [2299, 574, 2329, 584, "#7466e7"],
  [2205, 611, 2227, 621, "#7466e7"],
  [2205, 645, 2227, 655, "#7466e7"],
  [2218, 679, 2227, 688, "#281b9a"],
  [2205, 711, 2223, 719, "#3a2bdc"],
  [2240, 606, 2263, 614, "#7466e7"],
  [2276, 606, 2297, 614, "#7466e7"],
  [2310, 606, 2329, 614, "#7466e7"],
  [2276, 633, 2298, 637, "#7466e7"],
];

const VIOLET_TINY = [
  [2262, 2283, 646, 658], [2289, 2308, 646, 658], [2313, 2332, 646, 658],
  [2262, 2281, 664, 676], [2286, 2298, 664, 676], [2303, 2315, 664, 676], [2321, 2332, 664, 676],
  [2262, 2281, 681, 692], [2286, 2298, 681, 692], [2303, 2315, 681, 689], [2321, 2332, 681, 689],
  [2262, 2281, 698, 708], [2286, 2298, 698, 708], [2303, 2315, 695, 701],
  [2303, 2315, 707, 712], [2262, 2281, 713, 722], [2286, 2298, 713, 722], [2303, 2315, 718, 722],
  [2319, 2323, 695, 699], [2328, 2332, 695, 699], [2319, 2323, 705, 709], [2328, 2332, 705, 709],
].map(([x1, x2, y1, y2]) => [x1, y1, x2, y2, "#392add"]);

const VIOLET_SRC = [
  [2352, 181, 2538, 421, "#5848e2"],
  [2355, 210, 2535, 288, "#6858e4"],
  [2355, 292, 2480, 358, "#5040e0"],
  [2355, 362, 2480, 417, "#3427d0"],
  [2484, 292, 2535, 417, "#2e21b2"],
  [2352, 427, 2538, 581, "#4031d6"],
  [2355, 454, 2534, 578, "#382ad6"],
  [2356, 471, 2514, 576, "#3d2ee0"],
  [2516, 471, 2532, 547, "#2d20ac"],
  [2516, 549, 2532, 574, "#281b98"],
  [2352, 587, 2473, 648, "#3c2ecc"],
  [2355, 615, 2379, 645, "#5141e0"],
  [2382, 615, 2412, 629, "#3e2fe0"],
  [2382, 632, 2412, 645, "#3122ba"],
  [2416, 615, 2436, 629, "#3022b0"],
  [2416, 632, 2436, 645, "#281b98"],
  [2440, 615, 2454, 629, "#2a1ca4"],
  [2440, 632, 2454, 645, "#241890"],
  [2457, 615, 2470, 628, "#20147c"],
  [2457, 632, 2470, 637, "#1c126e"],
  [2457, 640, 2470, 645, "#1c126e"],
  [2479, 587, 2538, 663, "#3a2cc0"],
  [2482, 615, 2514, 639, "#3325c8"],
  [2482, 642, 2514, 660, "#2a1da4"],
  [2517, 615, 2535, 643, "#281c9c"],
  [2517, 647, 2535, 660, "#1c1260"],
  [2352, 654, 2473, 713, "#3a2cbc"],
  [2355, 682, 2394, 710, "#4a3be0"],
  [2397, 682, 2428, 710, "#2f21bc"],
  [2431, 682, 2463, 700, "#251a90"],
  [2432, 692, 2449, 699, "#3021b4"],
  [2451, 692, 2460, 699, "#120b40"],
  [2431, 704, 2463, 710, "#1f1480"],
  [2465, 682, 2470, 690, "#1c126e"],
  [2465, 694, 2470, 702, "#1c126e"],
  [2465, 706, 2470, 709, "#1c126e"],
  [2479, 669, 2535, 713, "#3a2cb4"],
  [2483, 703, 2507, 708, "#4a3bdd"],
  [2512, 693, 2530, 710, "#2a1e90"],
];

const INK = "#17123c";
const WHITE = "#ffffff";
const VIOLET_LABELS = [
  ["umi.fa86a469.js", 2010, 78, 44],
  ["node_modules", 1907, 158, 39],
  ["src", 2445, 158, 40, WHITE],
  ["_react-dom@16.8.6@react-dom", 1635, 200, 14, INK],
  ["react-dom.production.min.js", 1635, 312, 22, "#15131f"],
  ["_core-js@2.6.9@core-js", 1635, 406, 14, INK],
  ["_antd@3.20.7@antd", 1635, 598, 14, INK],
  ["_moment@2.24.0@moment", 1908, 200, 14, INK],
  ["moment.js", 1898, 280, 34, "#0a0914"],
  ["_intl@1.2.5@intl", 2106, 200, 14, INK],
  ["core.js", 2106, 290, 37, "#0a0914"],
  ["utils.js", 1886, 398, 14, INK],
  ["io.js", 1827, 450, 16, INK],
  ["tinycolor.js", 1987, 574, 16, INK],
  ["en.js", 2223, 316, 17, WHITE],
  ["zh.js", 2277, 316, 17, WHITE],
  ["util.js", 2235, 449, 17, WHITE],
  ["locales", 2445, 200, 14, INK],
  ["zh-CN.js + 11", 2445, 236, 21, INK],
  ["modules", 2445, 256, 21, INK],
  ["(concatenated)", 2445, 276, 21, INK],
  ["zh-TW.js + 11", 2418, 314, 15, WHITE],
  ["modules", 2418, 330, 15, WHITE],
  ["(concatenated)", 2418, 346, 15, WHITE],
  ["pt-BR.js + 11", 2418, 380, 14, WHITE],
  ["modules", 2418, 395, 14, WHITE],
  ["(concatenated)", 2418, 410, 14, WHITE],
  ["pages", 2445, 444, 15, WHITE],
  ["router.js + 3", 2435, 510, 20, WHITE],
  ["modules", 2435, 530, 20, WHITE],
  ["(concatenated)", 2435, 550, 20, WHITE],
  ["models", 2413, 606, 14, WHITE],
  ["utils", 2413, 672, 14, WHITE],
];

const VIOLET_DOTS = [
  [1635, 220, 22], [1594, 426, 20], [1511, 461], [1511, 501, 12], [1511, 529, 12], [1511, 556, 12],
  [1550, 447, 9], [1550, 471, 9], [1550, 494, 9], [1620, 616, 20], [1540, 629, 9], [1535, 659, 24],
  [1540, 692, 9], [1540, 707, 14], [1616, 655, 14], [1619, 703, 12], [1673, 644, 11], [1672, 676, 11],
  [1675, 707, 11], [1720, 645, 9], [2106, 218, 12], [2262, 195, 18], [2262, 218, 12], [2262, 249, 24],
  [1862, 351, 18], [1858, 374, 12], [1827, 406, 18], [1862, 481, 18], [1830, 504, 9], [1830, 536, 20],
  [1896, 506, 12], [1885, 535, 12], [1862, 584, 18], [1853, 607, 12], [1862, 666, 18], [1853, 700, 22],
  [1987, 351, 16], [1987, 444, 16], [1987, 467, 11], [1987, 532, 16], [1987, 613, 16], [1987, 641, 18],
  [1987, 678, 16], [1987, 699, 10], [2093, 351, 15], [2092, 372, 10], [2092, 385, 10], [2192, 351, 15],
  [2191, 372, 10], [2288, 351, 15], [2261, 379, 10], [2082, 415, 14], [2082, 437, 9], [2161, 415, 13],
  [2235, 415, 13], [2303, 444, 14], [2073, 482, 13], [2137, 480, 12], [2137, 502, 12], [2199, 480, 11],
  [2073, 549, 11], [2073, 615, 11], [2073, 706, 13], [2128, 533, 10], [2128, 557, 10], [2308, 502, 10],
];

const VIOLET_LIGHT_DOTS = [
  [1746, 426, 12], [1746, 443, 9], [1728, 464, 11], [1766, 464, 11], [2262, 285, 12], [2316, 311, 9],
  [2303, 415, 13], [2253, 480, 10], [2308, 480, 10], [2128, 589, 9], [2128, 639, 9], [2128, 690, 9],
  [2073, 681, 11], [2509, 354, 26], [2445, 463, 16], [2524, 509, 11], [2524, 562, 8], [2509, 601, 12],
  [2507, 681, 11], [2367, 630, 11], [2397, 622, 8], [2375, 696, 11], [2413, 696, 11], [2498, 627, 9],
  [2498, 650, 8], [2526, 629, 8], [2182, 529, 8], [2244, 529, 8], [2303, 529, 8], [2010, 247, 8], [2010, 285, 8],
];

function UmiChunk() {
  return (
    <g>
      <Cells
        r={3}
        list={[
          [1468, 20, 2552, 736, "#9085ec"],
          [1477, 108, 2337, 727, "#8072ea"],
          [2346, 108, 2544, 719, "#5b4be4"],
        ]}
      />
      <Cells list={VIOLET_GROUPS} />
      <Cells list={VIOLET_CELLS} />
      <Cells list={VIOLET_TINY} />
      <Cells list={VIOLET_SRC} />
      <Swarm box={[1564, 436, 1701, 568]} n={270} from="#bfb7f3" to="#6152e2" gap={2} />
      <Swarm box={[1709, 480, 1783, 561]} n={110} from="#4f40df" to="#281b9a" gap={2} />
      <Swarm box={[1799, 615, 1907, 642]} n={24} from="#b1a8f1" to="#3e2edc" gap={2} />
      <Swarm box={[1937, 366, 2034, 421]} n={110} from="#aaa0f0" to="#5041df" gap={2} />
      <Swarm box={[2003, 476, 2034, 507]} n={9} from="#5445e0" to="#3425d4" gap={2} />
      <Labels list={VIOLET_LABELS} />
      <Dots list={VIOLET_DOTS} fill={INK} />
      <Dots list={VIOLET_LIGHT_DOTS} fill={WHITE} />
    </g>
  );
}

/* ---------- small async chunks ---------- */

const CHUNK_COLUMNS = [
  { x: [1468, 1609], dot: 22, bar: true, rows: [[918, 1011, "#b4dedd"], [1027, 1117, "#ade3d7"], [1133, 1208, "#a3e4d2"], [1224, 1296, "#99e6c9"], [1312, 1382, "#94ebc7"]] },
  { x: [1625, 1730], dot: 18, bar: true, rows: [[752, 845, "#b1c6e1"], [861, 940, "#abcfe0"], [956, 1033, "#a7dae2"], [1049, 1126, "#a0e5e3"], [1142, 1212, "#99e8de"], [1228, 1298, "#92ead9"], [1314, 1382, "#8aedd5"]] },
  { x: [1746, 1833], dot: 16, bar: true, rows: [[752, 834, "#a2bde1"], [850, 931, "#a0c8e3"], [947, 1024, "#9dd2e4"], [1040, 1115, "#97dee7"], [1131, 1205, "#90e8ea"], [1221, 1294, "#88eee4"], [1310, 1382, "#83f1e2"]] },
  { x: [1849, 1926], dot: 14, bar: true, rows: [[752, 833, "#99b6e5"], [849, 929, "#98c3e7"], [945, 1023, "#94cde8"], [1039, 1117, "#8ed6ea"], [1133, 1206, "#89e3eb"], [1222, 1294, "#84edee"], [1311, 1382, "#80f6ee"]] },
  { x: [1942, 2005], dot: 12, rows: [[836, 905, "#8cb9e7"], [920, 987, "#8cc5ea"], [1003, 1069, "#89caeb"], [1085, 1148, "#82d4ec"], [1164, 1226, "#7edff1"], [1242, 1304, "#7be8f3"], [1320, 1382, "#76f6fa"]] },
  { x: [2020, 2081], dot: 9, rows: [[913, 968, "#83beec"], [984, 1038, "#80c6ee"], [1055, 1108, "#7ccdf0"], [1124, 1178, "#79d6f2"], [1194, 1246, "#77def5"], [1262, 1314, "#74e8f8"], [1330, 1382, "#70f5fc"]] },
  { x: [2097, 2145], dot: 7, rows: [[978, 1026, "#78bdf1"], [1042, 1089, "#77c7f4"], [1105, 1150, "#72ccf5"], [1166, 1210, "#70d4f7"], [1226, 1268, "#6fddf9"], [1284, 1325, "#6de6fd"], [1341, 1382, "#6deeff"]] },
  { x: [2161, 2204], dot: 6, rows: [[1037, 1075, "#71c1f7"], [1091, 1129, "#6ecaf8"], [1145, 1182, "#6dd2fc"]] },
  { x: [2161, 2204], plain: true, rows: [[1198, 1235, "#2dc3fc"], [1250, 1284, "#2fcdff"], [1300, 1333, "#2fd7ff"], [1349, 1382, "#2fe1ff"]] },
  { x: [2220, 2252], plain: true, rows: [[1086, 1114, "#2dacff"], [1129, 1156, "#2bb2ff"], [1172, 1197, "#2bb9ff"], [1213, 1237, "#2cc1ff"], [1253, 1276, "#2ec8ff"], [1292, 1314, "#2fcfff"], [1330, 1349, "#2fd6ff"], [1365, 1382, "#2fdfff"]] },
];

const CHUNK_ROWS = [
  { y: [752, 820], dot: 12, cols: [[1942, 2020, "#8eaee8"], [2036, 2114, "#82a8ee"], [2130, 2206, "#76a1f1"], [2222, 2297, "#6e9ff6"], [2313, 2388, "#6498ff"], [2404, 2471, "#6498ff"], [2488, 2552, "#6498ff"]] },
  { y: [836, 896], dot: 10, cols: [[2020, 2085, "#86b3ec"], [2101, 2164, "#7aaff1"], [2180, 2242, "#72a9f5"], [2258, 2320, "#6ba5fb"], [2336, 2398, "#66a0ff"], [2414, 2475, "#66a0ff"], [2492, 2552, "#659dff"]] },
  { y: [913, 963], dot: 8, cols: [[2097, 2155, "#7bb6f2"], [2171, 2226, "#70b1f7"], [2242, 2294, "#6aaffe"], [2310, 2359, "#69adfe"], [2375, 2424, "#68abff"], [2440, 2488, "#67a9ff"], [2504, 2552, "#66a7ff"]] },
  { y: [978, 1021], dot: 6, cols: [[2161, 2206, "#71b9f6"], [2222, 2265, "#6bb5fa"], [2282, 2324, "#68b2ff"], [2340, 2383, "#68b1ff"], [2399, 2440, "#68afff"], [2456, 2497, "#68aeff"], [2513, 2552, "#67adff"]] },
  { y: [1037, 1070], plain: true, cols: [[2220, 2260, "#2da4fb"], [2276, 2313, "#29a0ff"], [2329, 2363, "#299fff"], [2379, 2412, "#289bff"], [2428, 2460, "#2898ff"], [2475, 2507, "#2796ff"], [2522, 2552, "#2792ff"]] },
];

function Chunk({ x1, y1, x2, y2, fill, dot, bar, plain, shade }) {
  const w = x2 - x1;
  const h = y2 - y1;
  const at = (start, size, part) => Math.round(start + size * part);
  return (
    <g>
      <rect x={x1} y={y1} width={w} height={h} rx={3} fill={fill} />
      {!plain && (
        <>
          <rect
            x={at(x1, w, 0.1)}
            y={at(y1, h, 0.58)}
            width={Math.round(w * 0.78)}
            height={Math.round(h * 0.3)}
            fill={shade ? "#2f80ff" : bar ? "#ffffff" : "#50d0ff"}
            fillOpacity={shade ? 0.12 : 0.06}
          />
          <Dots list={[[Math.round(x1 + w / 2), at(y1, h, 0.27), dot]]} fill="#1c2b33" opacity={dot > 12 ? 0.8 : 0.4} />
          {bar && h > 71 && (
            <>
              <rect x={at(x1, w, 0.14)} y={at(y1, h, 0.77)} width={Math.round(w * 0.73)} height={h > 79 ? 6 : 4} fill="#ffffff" fillOpacity={h > 79 ? 0.55 : 0.4} />
              <Dots list={[[Math.round(x1 + w / 2), at(y1, h, 0.66), 9]]} fill="#1c2b33" opacity={0.3} />
            </>
          )}
        </>
      )}
    </g>
  );
}

function AsyncChunks() {
  return (
    <g>
      <Cells r={3} list={[[1468, 752, 1609, 901, "#bbd1dc"]]} />
      <Cells
        list={[
          [1478, 832, 1600, 892, "#c3d7e0"],
          [1482, 864, 1572, 888, "#cfdfe7"],
          [1486, 878, 1568, 884, "#f1f5f8"],
          [1578, 864, 1595, 888, "#9bbccf"],
          [1580, 878, 1589, 886, "#91b4c9"],
        ]}
      />
      <Labels list={[["src", 1539, 852, 15, "#1c2b33"]]} />
      <Dots list={[[1539, 791, 30]]} fill="#111111" />
      <Dots list={[[1527, 870, 8], [1527, 881, 8]]} opacity={0.4} />
      {CHUNK_COLUMNS.flatMap(({ x, rows, ...rest }, c) =>
        rows.map(([y1, y2, fill]) => (
          <Chunk key={`c${c}-${y1}`} x1={x[0]} x2={x[1]} y1={y1} y2={y2} fill={fill} {...rest} />
        ))
      )}
      {CHUNK_ROWS.flatMap(({ y, cols, ...rest }, r) =>
        cols.map(([x1, x2, fill]) => (
          <Chunk key={`r${r}-${x1}`} x1={x1} x2={x2} y1={y[0]} y2={y[1]} fill={fill} shade {...rest} />
        ))
      )}
    </g>
  );
}

function FoamTreeBadge() {
  return (
    <g>
      <rect x={2268} y={1112} width={284} height={270} rx={6} fill="#e5e5e5" />
      <svg x={2330} y={1160} width={160} height={170} viewBox="0 0 480 510">
        <g fill="#c8c8c8">
          <path d="M70 82q4-16 22-22h49l38 67v55l-30 46-79 8z" />
          <path d="M349 60h61v29h-47z" />
          <path d="M311 278h40l59 30v70l-22 20H242v-74z" />
        </g>
        <g fill="#dc1a18">
          <path d="M156 60h120l-6 42-84 16z" />
          <path d="M288 58h46l16 38-18 46-26 2-26-44z" />
          <path d="M362 102h48v59h-52l-13-18z" />
          <path d="M192 130l76-16 26 38-22 34-82-6z" />
          <path d="M310 156h30l17 18-12 88h-40l-23-68z" />
          <path d="M370 174h40v118l-56-30z" />
          <path d="M182 192l90 6 24 70-56 48-80-80z" />
          <path d="M68 252l78-10 28 30-34 46H68z" />
          <path d="M68 332l76-2 18 68H68z" />
          <path d="M186 284l44 46-2 68h-52l-20-70z" />
        </g>
      </svg>
      <text x={2410} y={1314} fontSize={25} fontWeight={500} fill="#dd4038" textAnchor="middle" style={{ fontFamily: '"Noto Sans", sans-serif' }}>
        FoamTree
      </text>
    </g>
  );
}

/* ---------- drawer ---------- */

const CHUNK_LIST = [
  ["All", "3.95 MB"],
  ["vendors.eec4a0ec.async.js", "2.31 MB"],
  ["umi.fa86a469.js", "946.65 KB"],
  ["30.b6f3bb80.async.js", "30.45 KB"],
  ["37.959a68b3.async.js", "20.16 KB"],
  ["82.8f69106f.async.js", "19.6 KB"],
  ["40.3c76c0a7.async.js", "16.73 KB"],
  ["31.5ebaf399.async.js", "16.32 KB"],
  ["2.01820f0a.async.js", "15.82 KB"],
  ["106.e6ebe769.async.js", "15.5 KB"],
  ["44.7f527502.async.js", "13.46 KB"],
  ["1.a0225b50.async.js", "13.21 KB"],
  ["98.7bd6e563.async.js", "13.18 KB"],
  ["100.fdbe90d9.async.js", "12.26 KB"],
  ["14.8d4a8876.async.js", "12.16 KB"],
  ["45.7cb5a3bb.async.js", "11.96 KB"],
  ["71.1bf123df.async.js", "11.82 KB"],
  ["54.88100631.async.js", "11.71 KB"],
  ["57.8bd01bea.async.js", "11.18 KB"],
  ["64.a0953ae9.async.js", "11.01 KB"],
  ["3.4087d1a2.async.js", "10.94 KB"],
  ["43.a4be9d61.async.js", "10.68 KB"],
  ["11.632ae02a.async.js", "10.67 KB"],
  ["61.cda97e1e.async.js", "10.57 KB"],
];

function Check({ children, defaultChecked = false }) {
  return (
    <label className="flex h-[38px] items-center gap-3 pl-1.5 whitespace-nowrap">
      <span className="grid size-6 shrink-0">
        <input
          type="checkbox"
          defaultChecked={defaultChecked}
          className="peer col-start-1 row-start-1 size-6 appearance-none rounded-md border border-[#b5b5b5] bg-white checked:border-[#468ff6] checked:bg-[#468ff6]"
        />
        <svg viewBox="0 0 24 24" className="pointer-events-none invisible col-start-1 row-start-1 size-6 peer-checked:visible">
          <path d="M6.5 12.5l4 4.5 7.5-10.5" fill="none" stroke="#fff" strokeWidth="2.5" strokeLinecap="round" strokeLinejoin="round" />
        </svg>
      </span>
      <span>{children}</span>
    </label>
  );
}

function SizeButton({ children, active = false }) {
  return (
    <button
      type="button"
      aria-pressed={active}
      className={
        active
          ? "h-[53px] rounded-lg border-2 border-[#aaa] bg-[#ffa526] px-3.5"
          : "h-[53px] rounded-lg border-2 border-[#aaa] bg-white px-3.5 text-[#2a2a2a]"
      }
    >
      {children}
    </button>
  );
}

function Drawer() {
  return (
    <aside className="absolute inset-y-0 left-0 flex w-[786px] overflow-hidden border-r-2 border-[#aaa] bg-white font-['DejaVu_Sans',Verdana,sans-serif] text-[24px] leading-7 text-black opacity-95">
      <div className="min-w-0 flex-1 pl-10">
        <div className="flex items-start justify-between pt-5">
          <h2 className="mt-8 text-[23px] leading-7 font-bold">Treemap sizes:</h2>
          <div className="flex gap-2.5">
            <button type="button" aria-label="Pin" className="flex h-[52px] w-[54px] items-center justify-center rounded-lg border-2 border-[#aaa]">
              <svg viewBox="0 0 18 28" className="h-7 w-[18px]">
                <path d="M5 1h8l1.500 2-1.500 2.500.5 5 3 3V16l-3 1.500h-9L1.500 16v-2.500l3-3 .5-5L3.500 3z" fill="#000" />
                <path d="M7 19h4l-2 8z" fill="#000" />
              </svg>
            </button>
            <button type="button" aria-label="Hide sidebar" className="flex h-[52px] w-[54px] items-center justify-center rounded-lg border-2 border-[#aaa]">
              <svg viewBox="0 0 12 22" className="h-[22px] w-3">
                <path d="M10.500 1L1.500 11l9 10" fill="none" stroke="#000" strokeWidth="1.500" />
              </svg>
            </button>
          </div>
        </div>
        <div className="mt-3.5 flex gap-2.5">
          <SizeButton>Stat</SizeButton>
          <SizeButton active>Parsed</SizeButton>
          <SizeButton>Gzipped</SizeButton>
        </div>
        <div className="mt-2">
          <Check>Show content of concatenated modules (inaccurate)</Check>
        </div>

        <h2 className="mt-11 text-[23px] leading-7 font-bold">
          <label htmlFor="module-search">Search modules:</label>
        </h2>
        <div className="mt-3 flex gap-1.5 pr-10">
          <input
            id="module-search"
            type="text"
            placeholder="Enter regexp"
            className="h-[54px] min-w-0 flex-1 rounded-lg border-2 border-[#aaa] bg-white px-2.5 text-[22px] placeholder:text-[#757575]"
          />
          <button type="button" aria-label="Clear search" className="h-[54px] w-[50px] rounded-lg border-2 border-[#aaa] text-[22px] text-[#2a2a2a]">
            x
          </button>
        </div>

        <h2 className="mt-[90px] text-[23px] leading-7 font-bold">Show chunks:</h2>
        <div className="mt-2.5">
          {CHUNK_LIST.map(([name, size]) => (
            <Check key={name} defaultChecked>
              {name} (<strong className="font-bold">{size}</strong>)
            </Check>
          ))}
        </div>
      </div>
      <div className="w-[30px] shrink-0 border-l-2 border-[#e8e8e8] bg-[#fafafa] px-1.5 py-1.5">
        <div className="h-[394px] rounded-full bg-[#c1c1c1]" />
      </div>
    </aside>
  );
}

export default function App() {
  return (
    <div className="overflow-hidden bg-white">
      <div className="h-3 border-b border-[#aaa]" />
      <main className="relative">
        <svg viewBox="0 12 2558 1376" className="block h-auto w-full" role="img" aria-label="Bundle treemap" style={{ fontFamily: MAP_FONT }}>
          <VendorsChunk />
          <UmiChunk />
          <AsyncChunks />
          <FoamTreeBadge />
        </svg>
        <Drawer />
      </main>
    </div>
  );
}
